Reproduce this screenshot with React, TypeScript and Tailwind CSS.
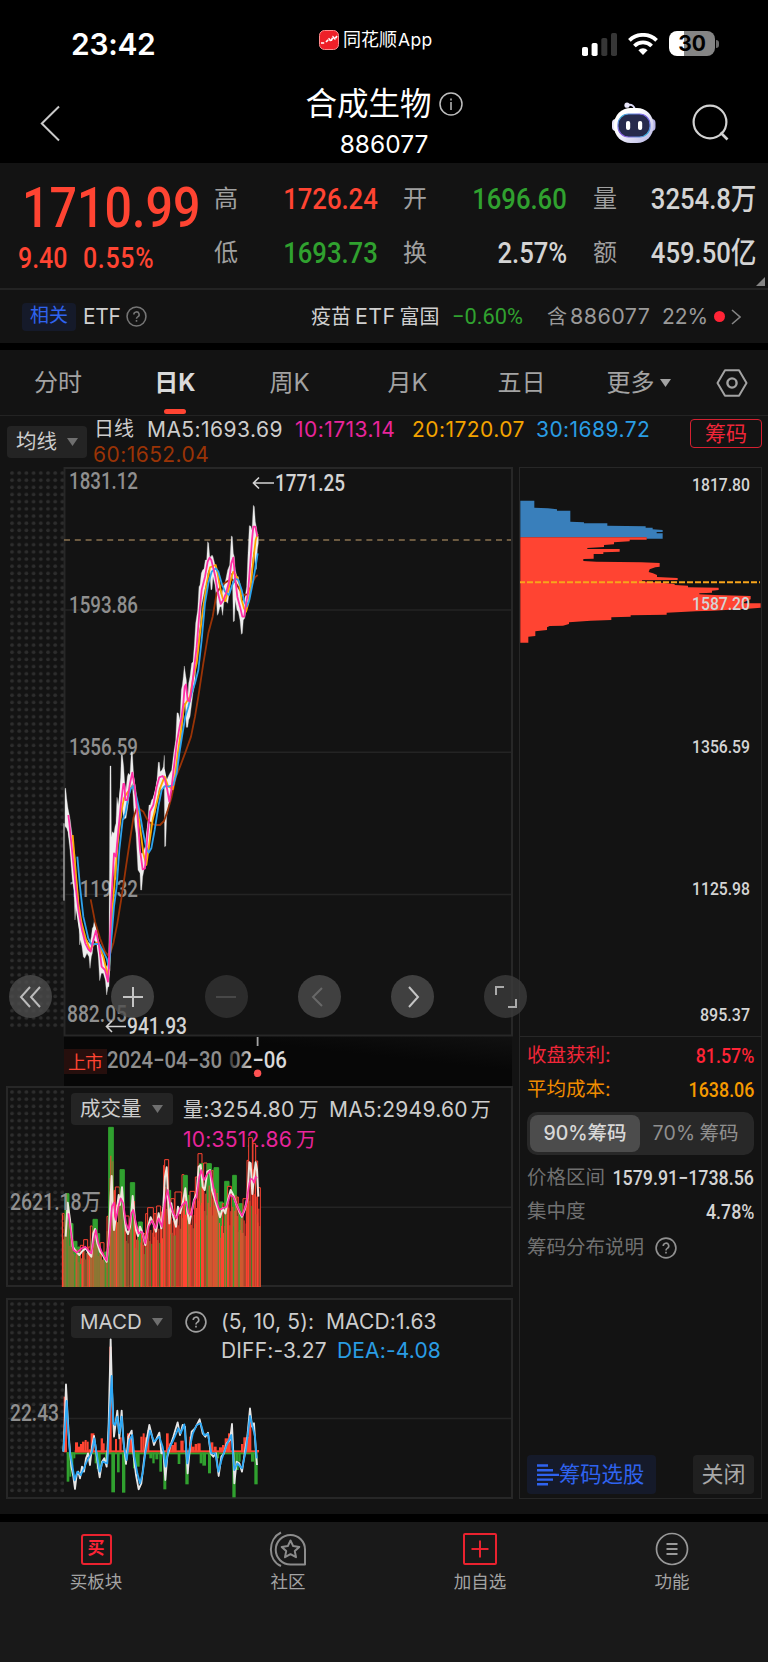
import type { ReactNode } from "react";
import { clsx } from "clsx";

type Tone = "r" | "g";

const RED = "#ff4432";
const GREEN = "#30a12f";

// [x, high, low]
const candles: [number, number, number][] = [
  [75, 895, 1008], [77, 895, 1012], [80, 925, 1014], [84, 955, 1025], [90, 985, 1080],
  [97, 1040, 1170], [102, 1080, 1200], [105, 1100, 1290], [108, 1150, 1250], [112, 1190, 1270], [117, 1250, 1290], [119, 1260, 1365],
  [122, 1290, 1350], [126, 1310, 1370], [130, 1330, 1400], [134, 1340, 1405], [141, 1350, 1390], [147, 1360, 1400], [150, 1360, 1435],
  [154, 1340, 1400], [157, 1315, 1390], [160, 1310, 1360], [163, 1290, 1350], [170, 1320, 1360], [175, 1350, 1400], [179, 1370, 1472],
  [184, 1390, 1450], [190, 1400, 1450], [196, 1425, 1470], [200, 1430, 1515], [204, 1420, 1490], [207, 1410, 1490], [210, 828, 1350],
  [213, 828, 1310], [214, 1040, 1220], [217, 1025, 1190], [222, 1030, 1120], [225, 1010, 1170], [228, 1000, 1165], [231, 922, 1070],
  [236, 955, 1040], [241, 890, 1000], [244, 795, 980], [247, 795, 950], [251, 830, 990], [254, 880, 985], [258, 900, 985],
  [262, 860, 960], [265, 850, 940], [270, 855, 900], [274, 785, 890], [277, 785, 880], [281, 860, 950], [285, 890, 1010], [288, 900, 1030],
  [294, 1000, 1140], [300, 1080, 1150], [302, 1090, 1200], [305, 1090, 1200], [308, 1090, 1160], [316, 1070, 1120], [322, 1010, 1100],
  [327, 945, 1080], [331, 945, 1000], [335, 930, 1000], [339, 925, 980], [345, 905, 970], [351, 870, 930], [355, 817, 910], [358, 817, 890],
  [361, 850, 900], [366, 840, 900], [370, 830, 890], [373, 796, 890], [374, 870, 1070], [377, 870, 1068], [380, 870, 980],
  [387, 855, 940], [395, 840, 900], [401, 790, 880], [407, 750, 850], [411, 668, 830], [415, 670, 790], [420, 690, 770],
  [424, 600, 740], [427, 586, 700], [430, 560, 680], [433, 528, 640], [436, 550, 640], [439, 570, 712], [443, 630, 712], [446, 580, 690],
  [450, 560, 680], [455, 520, 640], [459, 515, 610], [463, 465, 590], [467, 400, 540], [473, 360, 480], [477, 290, 430],
  [480, 285, 410], [484, 250, 350], [488, 240, 330], [492, 236, 310], [496, 210, 290], [500, 210, 280], [503, 155, 250],
  [506, 160, 240], [509, 200, 240], [513, 200, 300], [516, 195, 298], [519, 200, 260], [525, 225, 285], [529, 240, 320],
  [532, 250, 376], [535, 270, 370], [540, 300, 350], [544, 320, 350], [548, 300, 376], [551, 290, 340], [555, 280, 330],
  [563, 240, 340], [569, 225, 300], [574, 138, 250], [577, 140, 250], [580, 190, 395], [583, 200, 393], [586, 240, 330],
  [591, 260, 360], [595, 260, 365], [600, 300, 390], [604, 330, 433], [607, 340, 430], [610, 330, 390], [614, 330, 385],
  [620, 290, 350], [624, 190, 335], [628, 107, 310], [632, 108, 290], [636, 120, 230], [640, 46, 190], [643, 50, 180],
  [646, 95, 240], [649, 110, 238], [652, 130, 180], [655, 140, 160],
];

const averages = [
  {
    color: "#f0f0f0",
    points: "79,960 84,1010 92,1060 100,1150 108,1240 118,1310 130,1370 144,1380 152,1390 158,1350 164,1310 172,1350 182,1430 192,1440 202,1480 208,1440 212,1180 220,1070 230,1010 240,920 247,850 256,930 268,890 276,840 284,890 296,1080 304,1150 312,1120 324,1010 334,960 350,890 358,850 372,840 384,900 398,850 412,740",
  },
  {
    color: "#9a3306",
    points: "152,1228 165,1295 180,1345 195,1385 207,1400 220,1360 232,1300 245,1220 258,1130 270,1050 280,985 290,955 300,958 310,965 320,985 330,998 345,1005 360,1005 372,993 382,965 395,920 408,860 420,830 437,785 453,740 465,680 475,620 490,520 505,430 518,380 530,310 545,285 560,275 575,268 585,275 600,300 610,315 622,313 635,285 645,262 653,255",
  },
  {
    color: "#ffa800",
    points: "98,1035 105,1120 115,1240 125,1300 137,1345 150,1380 160,1365 175,1355 190,1400 204,1460 210,1400 218,1250 226,1150 234,1050 243,970 252,925 262,908 275,890 282,890 290,930 300,1010 310,1090 319,1125 328,1060 338,990 350,940 362,890 374,860 384,888 398,898 405,860 412,800 422,730 432,650 440,635 450,620 460,560 470,520 480,430 490,350 500,280 510,232 520,228 527,225 533,250 540,290 548,325 556,333 565,300 573,265 580,245 590,260 598,280 605,330 612,355 618,365 625,340 632,290 640,210 647,150 653,132",
  },
  {
    color: "#2ea3ee",
    points: "112,1100 120,1190 130,1280 145,1345 155,1365 165,1362 178,1362 190,1385 200,1405 207,1435 213,1360 222,1250 230,1190 238,1080 248,990 256,970 265,920 273,895 280,888 288,915 298,960 308,1020 318,1070 326,1088 334,1075 344,1020 355,950 365,900 375,888 385,890 400,885 410,850 418,790 426,740 436,680 445,650 455,610 465,580 475,540 485,450 495,340 505,280 515,245 527,235 535,245 545,280 555,305 567,315 575,290 585,265 595,270 605,300 613,335 620,350 628,330 638,280 645,240 653,190",
  },
  {
    color: "#ff2fa5",
    points: "85,975 88,1000 92,1040 100,1120 108,1200 116,1265 126,1320 136,1360 145,1378 152,1385 160,1350 168,1322 176,1360 185,1430 195,1440 204,1475 210,1350 214,1230 222,1090 228,1100 235,1020 243,940 250,882 253,882 256,930 262,930 270,880 277,848 284,890 292,970 300,1080 308,1138 315,1135 322,1040 330,965 340,945 350,890 358,862 368,858 375,870 382,900 388,935 394,900 402,830 410,760 418,715 425,680 430,640 434,590 438,583 443,630 449,635 456,590 463,530 470,470 478,370 485,300 495,260 503,215 509,203 514,210 520,235 526,260 534,310 542,342 550,330 558,310 566,280 574,220 580,203 585,260 592,320 600,350 607,380 613,380 618,340 624,310 630,230 636,150 640,110 646,110 652,140",
  },
];

// [x, width, top, tone]
const volumes: [number, number, number, Tone][] = [
  [186, 8, 400, "r"], [194, 14, 340, "g"], [208, 12, 430, "g"], [220, 12, 483, "g"], [232, 8, 500, "g"], [240, 10, 495, "r"],
  [250, 14, 478, "r"], [264, 8, 500, "r"], [270, 8, 437, "r"], [278, 15, 417, "g"], [293, 7, 460, "g"], [300, 13, 487, "r"],
  [313, 8, 515, "g"], [320, 6, 408, "r"], [325, 16, 141, "g"], [341, 4, 330, "r"], [345, 14, 320, "r"], [359, 15, 268, "g"],
  [374, 14, 407, "r"], [390, 15, 307, "g"], [405, 9, 440, "r"], [414, 14, 425, "g"], [428, 8, 460, "r"], [436, 7, 400, "r"],
  [442, 19, 382, "r"], [461, 8, 400, "r"], [469, 14, 377, "r"], [483, 7, 395, "r"], [490, 4, 255, "r"], [493, 14, 238, "r"],
  [507, 6, 330, "g"], [512, 12, 355, "r"], [524, 21, 335, "r"], [545, 8, 283, "r"], [549, 14, 285, "g"], [563, 6, 345, "g"],
  [569, 16, 333, "r"], [585, 8, 290, "r"], [593, 14, 220, "r"], [597, 13, 250, "g"], [610, 12, 248, "r"], [620, 15, 250, "g"],
  [635, 6, 270, "r"], [641, 16, 262, "g"], [657, 13, 365, "g"], [666, 7, 370, "r"], [673, 15, 303, "g"], [682, 13, 318, "r"],
  [697, 13, 285, "g"], [710, 6, 350, "r"], [716, 12, 370, "g"], [728, 12, 355, "r"], [740, 6, 240, "r"], [745, 13, 172, "r"],
  [758, 10, 190, "r"], [766, 8, 242, "r"], [772, 10, 322, "r"],
];

const volumeMa5 =
  "197,470 203,368 210,420 218,500 228,515 238,525 248,512 258,505 266,520 274,530 280,460 285,447 292,490 300,515 308,525 320,545 326,480 331,370 335,288 338,380 342,450 350,395 356,345 360,375 366,322 372,400 378,450 384,462 390,440 394,400 398,348 403,400 408,450 414,468 420,440 428,460 436,495 444,440 452,412 460,430 468,455 476,400 484,445 490,380 495,290 500,262 504,350 508,430 514,370 520,410 528,440 534,380 540,400 548,370 556,325 562,395 568,430 574,400 582,360 590,340 596,260 602,255 608,320 614,330 622,275 630,270 636,330 645,360 654,390 660,412 668,385 676,400 684,360 692,330 700,345 708,370 718,395 726,410 734,390 742,355 748,247 752,250 757,342 762,290 767,247 771,270 775,350";
const volumeMa10 =
  "205,400 212,450 220,510 230,518 245,505 256,500 266,512 274,520 282,475 288,450 295,490 305,515 320,542 328,470 336,380 342,368 348,420 354,385 362,355 370,370 378,430 386,450 394,400 400,390 408,430 416,460 426,455 436,490 446,440 456,422 466,445 476,415 486,440 494,370 503,330 510,370 520,400 530,415 540,385 550,372 558,365 566,400 574,405 582,362 590,350 598,290 604,270 612,300 622,282 630,272 638,310 648,360 658,390 668,385 680,380 690,345 700,350 712,380 726,408 738,375 748,310 752,297 757,297 762,308 767,290 771,295";

// [x, width, tip]; tips above the zero line are red
const macdBars: [number, number, number][] = [
  [191, 10, 320], [200, 8, 575], [208, 6, 560], [214, 6, 530], [220, 6, 505], [225, 9, 457], [234, 6, 470], [240, 6, 462],
  [246, 8, 455], [254, 6, 450], [260, 6, 455], [266, 6, 478], [272, 11, 430], [284, 6, 520], [290, 12, 537], [302, 7, 445], [309, 5, 460],
  [315, 5, 515], [324, 5, 360], [328, 7, 170], [334, 11, 607], [345, 6, 447], [351, 8, 547], [358, 7, 442], [366, 10, 608],
  [376, 5, 520], [381, 9, 430], [390, 8, 440], [399, 7, 535], [406, 13, 530], [421, 7, 440], [428, 6, 430], [434, 8, 442],
  [442, 6, 420], [448, 9, 505], [457, 7, 520], [466, 9, 508], [478, 8, 545], [490, 9, 598], [498, 8, 430], [506, 8, 460],
  [514, 8, 465], [522, 8, 457], [533, 8, 522], [541, 10, 452], [556, 10, 583], [568, 8, 440], [576, 8, 470], [584, 8, 462],
  [592, 10, 460], [599, 8, 520], [607, 11, 527], [624, 9, 550], [633, 7, 457], [641, 9, 470], [650, 7, 505], [657, 9, 472],
  [666, 8, 465], [674, 10, 445], [684, 8, 430], [697, 10, 622], [707, 9, 540], [716, 6, 515], [723, 7, 462], [730, 8, 442],
  [738, 9, 440], [747, 7, 380], [753, 9, 515], [763, 10, 583], [770, 7, 480],
];

const macdDiff =
  "190,485 194,400 198,283 203,380 208,460 214,530 220,560 225,597 230,555 235,545 240,565 246,530 252,545 258,505 264,490 270,525 276,470 282,438 288,480 294,530 299,562 306,515 313,505 320,530 326,400 332,148 336,300 342,440 347,400 352,362 358,445 365,362 370,450 378,522 385,440 395,422 401,500 408,555 416,598 424,580 432,510 440,450 448,405 454,430 462,465 470,445 478,428 484,490 490,485 496,570 502,500 510,470 520,440 533,397 540,435 548,405 555,410 560,500 563,550 570,470 575,425 585,415 599,388 608,430 616,440 624,428 632,490 640,500 648,490 656,558 664,500 672,490 680,460 690,450 696,402 700,490 703,580 710,515 718,520 726,545 734,490 742,440 750,355 756,410 762,400 768,490 771,525";
const macdDea =
  "190,485 197,380 200,333 205,430 210,490 216,520 224,570 232,545 242,555 252,535 260,515 268,500 276,485 283,445 290,490 299,545 308,515 322,520 330,350 335,258 340,400 345,405 352,380 358,430 365,380 372,470 380,510 388,450 397,435 403,500 412,550 420,580 428,550 436,490 450,422 462,455 478,440 488,470 497,530 505,480 520,450 535,415 542,430 553,403 562,520 570,470 578,432 590,405 602,400 612,435 624,432 634,490 646,490 655,545 666,505 680,465 694,435 703,540 712,520 726,535 738,480 750,378 758,410 765,440 770,505";

const chipsAbove =
  "457,482 499,482 499,503 540,505 567,508 567,512 607,512 607,545 648,547 648,550 718,550 718,557 833,559 833,563 854,563 854,568 884,570 884,576 866,576 866,580 884,580 884,596 835,596 835,592 457,592";
const chipsBelow =
  "457,592 836,592 836,599 785,599 785,604 738,607 738,613 708,615 708,621 658,624 658,627 755,627 755,635 706,637 706,642 677,642 677,656 646,657 646,663 686,665 820,667 875,669 875,680 862,682 845,688 842,696 855,700 867,705 867,711 929,714 929,720 822,721 822,724 880,728 920,732 920,735 960,737 960,742 1052,743 1052,750 1032,752 1032,758 994,760 994,763 1040,765 1148,768 1148,778 1120,790 1178,790 1178,803 1140,806 1033,812 983,814 896,818 896,824 788,826 788,830 730,832 730,840 668,842 603,847 603,852 585,857 545,858 537,862 537,870 502,874 502,888 481,890 481,908 457,908";

function ChartText({ x, y, w, size = 23, fill = "#8f8f8f", children }: {
  x: number; y: number; w: number; size?: number; fill?: string; children: string;
}) {
  return (
    <text
      x={x}
      y={y}
      fontSize={size}
      fill={fill}
      textLength={w}
      lengthAdjust="spacingAndGlyphs"
      className="font-['Roboto','Noto_Sans_CJK_SC',sans-serif] font-medium"
    >
      {children}
    </text>
  );
}

function Dots({ id, x, y, height }: { id: string; x: number; y: number; height: number }) {
  return (
    <>
      <pattern id={id} x={x} y={y} width="7.2" height="7.17" patternUnits="userSpaceOnUse">
        <circle cx="2" cy="2" r="1.85" fill="#2d2d2d" />
      </pattern>
      <rect x={x} y={y} width="54" height={height} fill={`url(#${id})`} />
    </>
  );
}

function HelpCircle({ size, className }: { size: number; className?: string }) {
  return (
    <svg width={size} height={size} viewBox="0 0 24 24" fill="none" stroke="currentColor" strokeWidth="1.8" className={className}>
      <circle cx="12" cy="12" r="10.8" />
      <path d="M9 9.8a3 3 0 1 1 4.4 2.6c-1 .6-1.4 1-1.4 2.2M12 16v2" />
    </svg>
  );
}

function StatusBar() {
  return (
    <div className="flex h-[84px] items-start text-white">
      <div className="ml-[71px] mt-[25px] w-[248px] text-[30px] leading-[38px] font-semibold tracking-[-0.3px]">23:42</div>
      <div className="mt-[28px] flex w-[263px] items-center gap-1">
        <svg width="20" height="20" viewBox="0 0 20 20">
          <rect x=".5" y=".5" width="19" height="19" rx="5" fill="#ee2028" stroke="#ff8b8d" />
          <path d="M2 13h4M7 12l3-3 2 2 2-4 2 2 2-3" fill="none" stroke="#fff" strokeWidth="1.7" strokeDasharray="3 .8" />
        </svg>
        <span className="text-[18px] leading-6">
          同花顺<span className="pl-px text-[17.5px] tracking-[0.4px]">App</span>
        </span>
      </div>
      <div className="mt-[31px] flex h-[25px] items-center">
        <svg width="36" height="24" viewBox="0 0 36 24">
          <rect x="0" y="15" width="6" height="9" rx="1.8" fill="#fff" />
          <rect x="9.6" y="11" width="6" height="13" rx="1.8" fill="#fff" />
          <rect x="19.3" y="6" width="6" height="18" rx="1.8" fill="#363636" />
          <rect x="29" y="1" width="6" height="23" rx="1.8" fill="#363636" />
        </svg>
        <svg className="ml-[10px]" width="30" height="22" viewBox="0 0 30 22" fill="none" stroke="#fff" strokeWidth="3.8">
          <path d="M1.4 7.4a19.4 19.4 0 0 1 27.2 0M6.4 13a12.2 12.2 0 0 1 17.2 0" />
          <path d="M15 22l-4.6-4.8a6.6 6.6 0 0 1 9.2 0z" fill="#fff" stroke="none" />
        </svg>
        <div className="ml-[11px] flex h-[25px] w-[46px] items-center justify-center rounded-lg bg-linear-to-r from-white from-32% to-[#858585] to-32% text-[21px] font-bold text-black">
          30
        </div>
        <div className="ml-px h-2 w-[3px] rounded-r-full bg-[#6a6a6a]" />
      </div>
    </div>
  );
}

function Header() {
  return (
    <div className="flex h-[79px] text-white">
      <div className="w-[180px] pt-[21px] pl-[40px]">
        <svg width="20" height="37" viewBox="0 0 20 37" fill="none" stroke="#c9c9c9" strokeWidth="2">
          <path d="M19 1.5L1.8 18.5 19 35.5" />
        </svg>
      </div>
      <div className="flex flex-1 flex-col items-center">
        <div className="flex items-center gap-[7px]">
          <span className="text-[31.5px] leading-10">合成生物</span>
          <svg width="24" height="24" viewBox="0 0 24 24" fill="none" stroke="#bdbdbd" strokeWidth="1.5">
            <circle cx="12" cy="12" r="11" />
            <path d="M12 10v8M12 6.4v2" />
          </svg>
        </div>
        <span className="text-[24.5px] leading-10">886077</span>
      </div>
      <div className="flex w-[180px] pt-[18px] pl-6">
        <svg width="44" height="42" viewBox="0 0 44 42">
          <defs>
            <linearGradient id="shell" x1="0" y1="0" x2="1" y2="1">
              <stop offset=".35" stopColor="#fff" />
              <stop offset="1" stopColor="#b5b3e4" />
            </linearGradient>
            <linearGradient id="rim" x1="1" y1="0" x2="0" y2="1">
              <stop offset="0" stopColor="#8c4ee8" />
              <stop offset=".5" stopColor="#3cb3da" />
              <stop offset="1" stopColor="#9b42dd" />
            </linearGradient>
          </defs>
          <path d="M16 3q6-1 7 5" stroke="#dcdaf5" strokeWidth="2" fill="none" />
          <circle cx="15" cy="3.2" r="2.6" fill="#e9e7fb" />
          <rect x="0" y="17" width="8" height="12" rx="4" fill="#e6e5fa" />
          <rect x="36" y="17" width="7.5" height="12" rx="4" fill="#b7b4e6" />
          <rect x="2" y="6" width="39.5" height="35" rx="16.5" fill="url(#shell)" />
          <rect x="6" y="12" width="32" height="23" rx="10.5" fill="#262a4c" stroke="url(#rim)" strokeWidth="1.2" />
          <rect x="14" y="19" width="4.2" height="9" rx="2" fill="#fff" />
          <rect x="26" y="19" width="4.2" height="9" rx="2" fill="#fff" />
        </svg>
        <svg className="ml-9 mt-[2px]" width="38" height="38" viewBox="0 0 38 38" fill="none" stroke="#d2d2d2" strokeWidth="2.2">
          <circle cx="18" cy="18" r="16.4" />
          <path d="M28.5 28.5l7 7" strokeWidth="2.6" />
        </svg>
      </div>
    </div>
  );
}

function Quote({ label, value, tone }: { label: string; value: string; tone: string }) {
  return (
    <div className="flex h-[54px] items-center justify-between">
      <span className="text-[24px] text-[#a0a0a0]">{label}</span>
      <span className={clsx("origin-right scale-x-[.87] font-['Roboto','Noto_Sans_CJK_SC',sans-serif] text-[29.5px] font-medium whitespace-nowrap", tone)}>
        {value}
      </span>
    </div>
  );
}

function QuoteSection() {
  return (
    <div className="relative flex h-[127px] border-b-2 border-[#232323] bg-[#131313] pt-[9px]">
      <div className="w-[214px] font-['Roboto'] font-medium text-[#ff4432]">
        <div className="ml-[22px] mt-[6px] origin-left scale-x-[.88] text-[55px] leading-[60px]">1710.99</div>
        <div className="ml-[18px] mt-[4px] flex origin-left scale-x-[.86] gap-[18px] text-[29px] leading-8 whitespace-nowrap">
          <span>9.40</span>
          <span className="tracking-[0.8px]">0.55%</span>
        </div>
      </div>
      <div className="w-[164px]">
        <Quote label="高" value="1726.24" tone="text-[#ff4432]" />
        <Quote label="低" value="1693.73" tone="text-[#30a12f]" />
      </div>
      <div className="ml-[25px] w-[164px]">
        <Quote label="开" value="1696.60" tone="text-[#30a12f]" />
        <Quote label="换" value="2.57%" tone="text-[#d4d4d4]" />
      </div>
      <div className="ml-[26px] w-[164px]">
        <Quote label="量" value="3254.8万" tone="text-[#d4d4d4]" />
        <Quote label="额" value="459.50亿" tone="text-[#d4d4d4]" />
      </div>
      <svg className="absolute right-[3px] bottom-[2px]" width="9" height="9">
        <path d="M9 0v9H0z" fill="#858585" />
      </svg>
    </div>
  );
}

function RelatedRow() {
  return (
    <div className="flex h-[53px] items-center bg-[#131313] text-[20px]">
      <span className="ml-[22px] flex h-[28px] w-[54px] items-center justify-center rounded bg-[#151a2a] text-[19px] text-[#2f63ef]">相关</span>
      <span className="ml-[7px] w-[37px] text-[21px] tracking-[-0.4px] text-[#d0d0d0]">ETF</span>
      <HelpCircle size={21} className="ml-[6px] text-[#757575]" />
      <span className="ml-[164px] w-[141px] whitespace-nowrap text-[#d0d0d0]">
        疫苗<span className="px-[4px] text-[21.5px] tracking-[0.3px]">ETF</span>富国
      </span>
      <span className="w-[95px] origin-left scale-x-[.97] font-['Roboto'] text-[22.5px] text-[#30a12f]">−0.60%</span>
      <span className="w-[115px] whitespace-nowrap text-[#9a9a9a]">
        含<span className="pl-[3px] text-[21.5px] tracking-[0.4px]">886077</span>
      </span>
      <span className="w-[52px] text-[21px] text-[#9a9a9a]">22%</span>
      <span className="size-[11px] rounded-full bg-[#ff2436]" />
      <svg className="ml-[6px]" width="10" height="16" fill="none" stroke="#858585" strokeWidth="1.6">
        <path d="M1 1l8 7-8 7" />
      </svg>
    </div>
  );
}

function Tabs() {
  const tabs = [
    { name: "分时", width: "w-[116px]" },
    { name: "日K", width: "w-[118px]", active: true },
    { name: "周K", width: "w-[111px]" },
    { name: "月K", width: "w-[125px]" },
    { name: "五日", width: "w-[103px]" },
  ];
  return (
    <div className="mt-[7px] flex h-[66px] border-b border-[#232323] bg-[#131313] text-[24px] text-[#a3a3a3]">
      {tabs.map((tab) => (
        <div key={tab.name} className={clsx("flex flex-col items-center justify-between pt-[15px]", tab.width, tab.active && "font-bold text-[#dadada]")}>
          <span className="leading-[36px]">{tab.name}</span>
          {tab.active && <span className="mb-px h-[5px] w-[22px] rounded-full bg-[#ff4432]" />}
        </div>
      ))}
      <div className="flex w-[131px] items-center justify-center gap-[5px] pt-px">
        更多
        <svg width="11" height="8">
          <path d="M0 0h11L5.5 8z" fill="#a3a3a3" />
        </svg>
      </div>
      <div className="flex w-[56px] items-center justify-center">
        <svg width="32" height="28" viewBox="0 0 32 28" fill="none" stroke="#a3a3a3" strokeWidth="2">
          <path d="M9 1.2h14L30.5 14 23 26.8H9L1.5 14z" strokeLinejoin="round" />
          <circle cx="16" cy="14" r="4.6" strokeWidth="2.4" />
        </svg>
      </div>
    </div>
  );
}

function Picker({ children, className }: { children: ReactNode; className: string }) {
  return (
    <div className={clsx("flex h-[32px] shrink-0 items-center gap-[10px] rounded bg-[#242424] pl-[9px] text-[20.5px] whitespace-nowrap text-[#cdcdcd]", className)}>
      {children}
      <svg width="11" height="8">
        <path d="M0 0h11L5.5 8z" fill="#6f6f6f" />
      </svg>
    </div>
  );
}

function Averages() {
  return (
    <div className="flex h-[51px]">
      <Picker className="mt-[10px] ml-[7px] w-[80px]">均线</Picker>
      <div className="ml-[7px] w-[596px] text-[21px] leading-[25px] tracking-[0.45px] text-[#cdcdcd]">
        <div className="flex pt-px">
          <span className="w-[53px] text-[20px] tracking-normal">日线</span>
          <span className="w-[148px]">MA5:1693.69</span>
          <span className="w-[117px] text-[#e8259b]">10:1713.14</span>
          <span className="w-[124px] text-[#f3a300]">20:1720.07</span>
          <span className="text-[#2a9de4]">30:1689.72</span>
        </div>
        <div className="-ml-px text-[#9a3306]">60:1652.04</div>
      </div>
      <div className="mt-[3px] flex h-[29px] w-[72px] items-center justify-center rounded border border-[#d42030] text-[21px] text-[#f02638]">
        筹码
      </div>
    </div>
  );
}

function ChartControls() {
  const icons = [
    { d: "M17 8L8 18l9 10M27 8l-9 10 9 10", tone: "mr-[9px] bg-[#4c4c4c]/80 text-[#bbb]" },
    { d: "M18 8v20M8 18h20", tone: "bg-[#4c4c4c]/80 text-[#c4c4c4]" },
    { d: "M8 18h20", tone: "bg-[#333]/80 text-[#484848]" },
    { d: "M21 9l-9 9 9 9", tone: "bg-[#4c4c4c]/80 text-[#686868]" },
    { d: "M14 8l9 10-9 10", tone: "bg-[#4c4c4c]/80 text-[#c4c4c4]" },
    { d: "M8 16V8h8M28 20v8h-8", tone: "bg-[#3c3c3c]/80 text-[#aaa]" },
  ];
  return (
    <div className="absolute top-[508px] left-[9px] flex gap-[50.3px]">
      {icons.map((icon) => (
        <div key={icon.d} className={clsx("flex size-[43px] items-center justify-center rounded-full", icon.tone)}>
          <svg width="36" height="36" fill="none" stroke="currentColor" strokeWidth="2">
            <path d={icon.d} />
          </svg>
        </div>
      ))}
    </div>
  );
}

function KLineChart() {
  const high = candles.map(([x, h]) => `${x},${h}`);
  const low = candles.map(([x, , l]) => `${x},${l}`).reverse();
  return (
    <div className="relative">
      <svg width="513" height="569" viewBox="0 467 513 569" className="relative block overflow-visible">
        <Dots id="k-dots" x={10} y={471} height={559} />
        <rect x="64.5" y="468" width="447.5" height="567.5" fill="none" stroke="#272727" strokeWidth="2" />
        {[610, 752.3, 894.5].map((y) => (
          <path key={y} d={`M65 ${y}H511`} stroke="#242424" strokeWidth="1.4" />
        ))}
        <path d="M64 540H511" stroke="#8a7350" strokeWidth="1.6" strokeDasharray="6 4.8" />
        <ChartText x={69} y={489} w={69}>1831.12</ChartText>
        <ChartText x={69} y={613} w={69}>1593.86</ChartText>
        <ChartText x={69} y={755} w={69}>1356.59</ChartText>
        <ChartText x={69} y={897} w={69}>1119.32</ChartText>
        <ChartText x={67} y={1021.5} w={60}>882.05</ChartText>
        <g transform="translate(40 490) scale(.33333)" fill="none" strokeLinejoin="round">
          <path d="M72 1232V1000" stroke="#dcdcdc" strokeWidth="3" />
          <polygon points={[...high, ...low].join(" ")} fill="#efefef" stroke="#d8d8d8" strokeWidth="1" />
          {averages.map((line) => (
            <polyline key={line.color} points={line.points} stroke={line.color} strokeWidth="5.4" />
          ))}
        </g>
        <g fill="none" stroke="#d4d4d4" strokeWidth="1.6">
          <path d="M274 483H254M259 477.5l-5.5 5.5 5.5 5.5M126 1026.5H106.5M112 1021l-5.5 5.5 5.5 5.5" />
        </g>
        <ChartText x={275} y={491} w={70} fill="#d4d4d4">1771.25</ChartText>
        <ChartText x={127} y={1033.5} w={60} fill="#d4d4d4">941.93</ChartText>
      </svg>
      <ChartControls />
      <div className="ml-[64px] flex h-[50px] w-[448px] bg-linear-to-tr from-[#070707] from-65% to-[#111]">
        <svg width="448" height="50" viewBox="64 1036 448 50">
          <defs>
            <linearGradient id="date-fade">
              <stop offset="0" stopColor="#3a3a3a" />
              <stop offset=".4" stopColor="#dadada" />
            </linearGradient>
          </defs>
          <rect x="64" y="1049" width="43" height="25" fill="#260f0d" />
          <text x="68" y="1068.5" fontSize="18" fill="#ff4432" textLength="35" className="font-['Noto_Sans_CJK_SC']">上市</text>
          <ChartText x={107} y={1068} w={115} fill="#8d8d8d">2024−04−30</ChartText>
          <ChartText x={229} y={1068} w={58} fill="url(#date-fade)">02−06</ChartText>
          <path d="M257.6 1037v9" stroke="#a5a5a5" strokeWidth="1.8" />
          <circle cx="257.6" cy="1073.3" r="3.7" fill="#ff5353" />
        </svg>
      </div>
    </div>
  );
}

function VolumeChart() {
  const bottom = 620;
  const stripes = volumes.flatMap(([x, w, top], i) =>
    Array.from({ length: Math.floor(w / 3) }, (_, j) => {
      const n = (i * 7 + j * 5) % 9;
      const reddish = x > 420 ? 6 : 1;
      return {
        x: x + j * 3,
        top: top + (bottom - top) * (0.18 + n * 0.035),
        fill: n < reddish ? RED : n > 7 ? GREEN : "#a66b35",
      };
    }),
  );
  return (
    <div className="relative ml-[6px] h-[201px] w-[507px] border-2 border-[#272727]">
      <div className="flex pt-[5px] pl-[63px] text-[21px] text-[#cdcdcd]">
        <Picker className="w-[102px]">成交量</Picker>
        <div className="ml-[10px] leading-[29px] tracking-[0.25px]">
          <div className="flex pt-[2px] whitespace-nowrap">
            <span className="w-[146px]"><span className="text-[20px]">量</span>:3254.80<span className="pl-[4px] text-[20px]">万</span></span>
            <span>MA5:2949.60<span className="pl-[3px] text-[20px]">万</span></span>
          </div>
          <div className="text-[#e8259b]">10:3512.86<span className="pl-[4px] text-[20px]">万</span></div>
        </div>
      </div>
      <svg className="absolute -top-[2px] -left-[2px]" width="507" height="201" viewBox="6 1086 507 201">
        <Dots id="volume-dots" x={10} y={1090} height={193} />
        <path d="M8 1207.3H511" stroke="#242424" strokeWidth="1.4" />
        <g transform="translate(0 1080) scale(.33333)" fill="none" strokeLinejoin="round">
          {volumes.map(([x, w, top, tone]) => (
            <rect
              key={x}
              x={x + 1}
              y={top + 1}
              width={Math.max(w - 2, 2)}
              height={bottom - top}
              fill={tone === "g" ? GREEN : "#131313"}
              stroke={tone === "g" ? GREEN : RED}
              strokeWidth="3"
            />
          ))}
          {stripes.map((s, i) => (
            <rect key={i} x={s.x} y={s.top} width="3" height={bottom - s.top + 2} fill={s.fill} />
          ))}
          <path d="M188 620V400" stroke={RED} strokeWidth="4" strokeDasharray="14 6" />
          <polyline points={volumeMa5} stroke="#efe6dc" strokeWidth="6" />
          <polyline points={volumeMa10} stroke="#ff2fa5" strokeWidth="5" />
        </g>
        <ChartText x={10} y={1210} w={91}>2621.18万</ChartText>
      </svg>
    </div>
  );
}

function MacdChart() {
  const zero = 487;
  return (
    <div className="relative mt-[11px] ml-[6px] h-[201px] w-[507px] border-2 border-[#272727]">
      <div className="flex pt-[6px] pl-[63px] text-[21px] text-[#cdcdcd]">
        <Picker className="w-[101px]">MACD</Picker>
        <HelpCircle size={22} className="mt-[5px] ml-[13px] text-[#a0a0a0]" />
        <div className="ml-[14px] leading-[29px] tracking-[0.15px] whitespace-nowrap">
          <div className="flex pt-px">
            <span className="w-[105px]">(5, 10, 5):</span>
            <span>MACD:1.63</span>
          </div>
          <div className="flex">
            <span className="w-[116px]">DIFF:-3.27</span>
            <span className="text-[#2a9de4]">DEA:-4.08</span>
          </div>
        </div>
      </div>
      <svg className="absolute -top-[2px] -left-[2px]" width="507" height="201" viewBox="6 1298 507 201">
        <Dots id="macd-dots" x={10} y={1302} height={193} />
        <path d="M8 1418.5H511" stroke="#242424" strokeWidth="1.4" />
        <g transform="translate(0 1290) scale(.33333)" fill="none" strokeLinejoin="round">
          <rect x="200" y={zero} width="570" height="6" fill={GREEN} />
          <rect x="224" y={zero - 6} width="550" height="6" fill={RED} />
          {macdBars.map(([x, w, tip]) => (
            <rect key={x} x={x} y={Math.min(tip, zero)} width={w} height={Math.abs(tip - zero)} fill={tip < zero ? RED : GREEN} />
          ))}
          <polyline points={macdDiff} stroke="#e6e6e6" strokeWidth="5.5" />
          <polyline points={macdDea} stroke="#2ea8f5" strokeWidth="5.5" />
        </g>
        <ChartText x={10} y={1421} w={49}>22.43</ChartText>
      </svg>
    </div>
  );
}

function ChipRow({ label, value, tone, labelTone }: { label: string; value: string; tone: string; labelTone: string }) {
  return (
    <div className="flex h-[34px] items-center justify-between whitespace-nowrap">
      <span className={clsx("text-[19.5px]", labelTone)}>{label}</span>
      <span className={clsx("w-0 flex-1 origin-right scale-x-[.87] font-['Roboto'] text-[20.5px] font-medium", tone)}>
        <span className="float-right">{value}</span>
      </span>
    </div>
  );
}

function ChipPanel() {
  return (
    <div className="ml-[6px] flex h-[1032px] w-[243px] flex-col border border-[#272727]">
      <svg width="241" height="568" viewBox="520 468 241 568" className="block shrink-0">
        <g transform="translate(368 340) scale(.33333)">
          <polygon points={chipsAbove} fill="#397fbb" />
          <polygon points={chipsBelow} fill={RED} />
        </g>
        <path d="M519 582.3H760" stroke="#f8a51b" strokeWidth="2" strokeDasharray="6 2" />
        <ChartText x={692} y={491} w={58} size={19} fill="#d4d4d4">1817.80</ChartText>
        <ChartText x={692} y={610} w={58} size={19} fill="#d4d4d4">1587.20</ChartText>
        <ChartText x={692} y={752.5} w={58} size={19} fill="#d4d4d4">1356.59</ChartText>
        <ChartText x={692} y={894.5} w={58} size={19} fill="#d4d4d4">1125.98</ChartText>
        <ChartText x={700} y={1021} w={50} size={19} fill="#d4d4d4">895.37</ChartText>
      </svg>
      <div className="flex flex-1 flex-col border-t border-[#272727] px-[7px] pt-[2px]">
        <ChipRow label="收盘获利:" value="81.57%" tone="text-[#ff2436]" labelTone="text-[#f02638]" />
        <ChipRow label="平均成本:" value="1638.06" tone="text-[#f59a00]" labelTone="text-[#f08c00]" />
        <div className="mt-[5px] mb-[6px] flex h-[43px] rounded-[10px] bg-[#282828] p-[3px] text-[19.5px]">
          <div className="flex w-[110px] items-center justify-center rounded-lg bg-[#4c4c4c] font-medium text-[#d8d8d8]">90%筹码</div>
          <div className="flex flex-1 items-center justify-center gap-[4px] text-[#909090]">
            <span className="tracking-[0.3px]">70%</span>筹码
          </div>
        </div>
        <ChipRow label="价格区间" value="1579.91−1738.56" tone="text-[#d4d4d4]" labelTone="text-[#707070]" />
        <ChipRow label="集中度" value="4.78%" tone="text-[#d4d4d4]" labelTone="text-[#707070]" />
        <div className="flex h-[37px] items-center gap-[11px] text-[19.5px] text-[#707070]">
          筹码分布说明
          <HelpCircle size={22} className="text-[#909090]" />
        </div>
        <div className="mt-auto mb-[4px] flex justify-between text-[21.3px]">
          <div className="flex h-[39px] w-[129px] items-center rounded bg-[#151a2a] pl-[10px] text-[#2f63ef]">
            <svg width="22" height="22" viewBox="0 0 22 22" stroke="#2f63ef" strokeWidth="2.4">
              <path d="M0 1.5h11M0 6.2h16M0 10.9h22M0 15.6h16M0 20.3h11" />
            </svg>
            筹码选股
          </div>
          <div className="flex h-[39px] w-[61px] items-center justify-center rounded bg-[#202020] text-[22px] text-[#a8a8a8]">关闭</div>
        </div>
      </div>
    </div>
  );
}

function BottomBar() {
  const items = [
    {
      label: "买板块",
      icon: (
        <div className="flex size-[31px] items-center justify-center rounded-[3px] border-2 border-[#e9222f] text-[17px] font-bold text-[#ff2436]">买</div>
      ),
    },
    {
      label: "社区",
      icon: (
        <svg width="38" height="36" viewBox="0 0 38 36" fill="none" stroke="#8c8c8c" strokeWidth="2" strokeLinejoin="round">
          <path d="M21.5 4a14.5 14.5 0 1 0 0 29.500H36V18.5A14.5 14.5 0 0 0 21.5 4z" />
          <path d="M12 1.5C-1.5 8-1.5 29 12 35" />
          <path d="M21.5 9.5l2.7 5.6 6.1.8-4.5 4.2 1.2 6.1-5.5-3-5.5 3 1.2-6.1-4.5-4.2 6.1-.8z" />
        </svg>
      ),
    },
    {
      label: "加自选",
      icon: (
        <svg width="34" height="32" viewBox="0 0 34 32" fill="none" stroke="#e9222f" strokeWidth="2">
          <rect x="1" y="1" width="32" height="30" rx="1" />
          <path d="M17 7.5v17M8.500 16h17" />
        </svg>
      ),
    },
    {
      label: "功能",
      icon: (
        <svg width="34" height="34" viewBox="0 0 34 34" fill="none" stroke="#999" strokeWidth="1.7">
          <circle cx="17" cy="17" r="15.5" />
          <path d="M11.5 12h11M11.5 17h11M11.5 22h11" strokeWidth="2" />
        </svg>
      ),
    },
  ];
  return (
    <div className="grid h-[140px] grid-cols-4 bg-[#191919] pt-[9px]">
      {items.map((item) => (
        <div key={item.label} className="flex flex-col items-center">
          <div className="flex h-[36px] items-center">{item.icon}</div>
          <span className="text-[17.5px] leading-[29px] text-[#a3a3a3]">{item.label}</span>
        </div>
      ))}
    </div>
  );
}

export default function App() {
  return (
    <div className="h-[1662px] w-[768px] overflow-hidden bg-black font-['Inter','Noto_Sans_CJK_SC',sans-serif]">
      <StatusBar />
      <Header />
      <QuoteSection />
      <RelatedRow />
      <Tabs />
      <div className="h-[1098px] bg-[#131313]">
        <Averages />
        <div className="flex">
          <div className="w-[513px]">
            <KLineChart />
            <VolumeChart />
            <MacdChart />
          </div>
          <ChipPanel />
        </div>
      </div>
      <div className="h-2" />
      <BottomBar />
    </div>
  );
}
